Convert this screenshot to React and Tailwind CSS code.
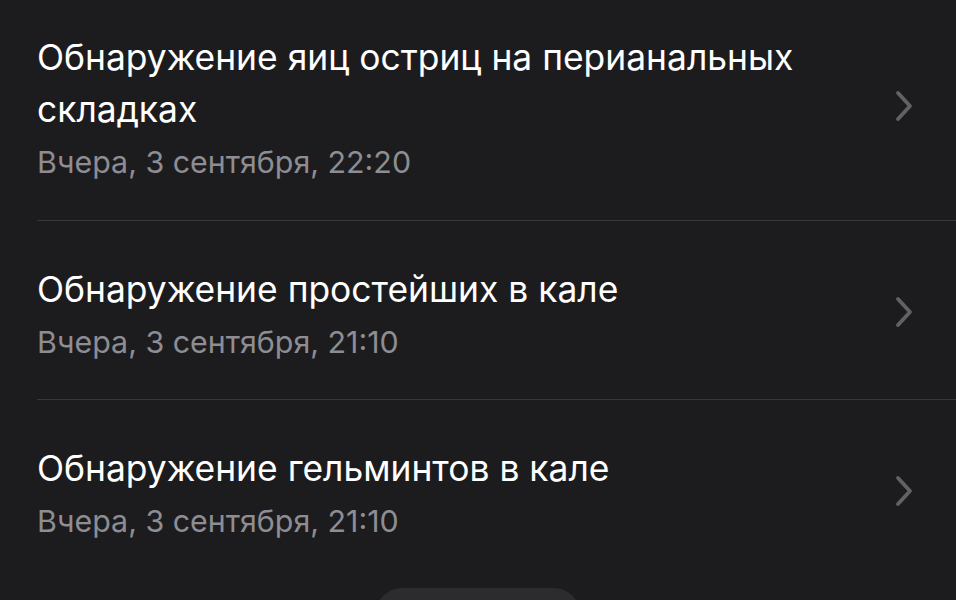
const ITEMS = [
  { title: 'Обнаружение яиц остриц на перианальных складках', date: 'Вчера, 3 сентября, 22:20' },
  { title: 'Обнаружение простейших в кале', date: 'Вчера, 3 сентября, 21:10' },
  { title: 'Обнаружение гельминтов в кале', date: 'Вчера, 3 сентября, 21:10' },
]

function Chevron() {
  return (
    <svg width="20" height="32" viewBox="0 0 20 32" fill="none" className="shrink-0 -mt-[8px]">
      <path d="M4 3 L16 16 L4 29" stroke="#616166" strokeWidth="3.8" strokeLinecap="round" strokeLinejoin="round" />
    </svg>
  )
}

export default function App() {
  return (
    <div className="w-[956px] h-[600px] overflow-hidden bg-[#1c1c1e]" style={{ fontFamily: 'Inter, "Noto Sans", sans-serif' }}>
      <div className="pl-[37px]">
        {ITEMS.map((item, i) => (
          <div
            key={i}
            className={`flex items-center pr-[42px] border-b ${i === 0 ? 'pt-[32px] pb-[32px]' : 'pt-[43px] pb-[31px]'} ${i === ITEMS.length - 1 ? 'border-transparent' : 'border-[#38383a]'}`}
          >
            <div className="flex-1 min-w-0 pr-[90px]">
              <div className="text-white text-[35.4px] leading-[52px]">{item.title}</div>
              <div className="text-[#8d8d93] text-[30.4px] leading-[52px]">{item.date}</div>
            </div>
            <Chevron />
          </div>
        ))}
      </div>
      <div className="flex justify-center mt-[9px]">
        <div className="w-[204px] h-[60px] rounded-[26px] bg-[#2c2c2e]" />
      </div>
    </div>
  )
}
